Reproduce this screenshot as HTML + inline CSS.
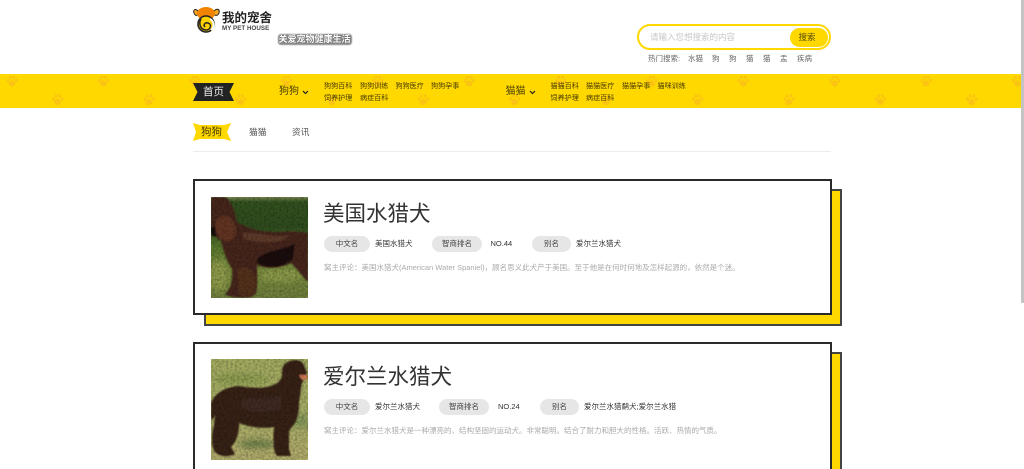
<!DOCTYPE html>
<html lang="zh">
<head>
<meta charset="utf-8">
<title>我的宠舍</title>
<style>
html,body{margin:0;padding:0;background:#fff;overflow:hidden}
#p{position:relative;width:1024px;height:469px;overflow:hidden;background:#fff;font-family:"Liberation Sans","Noto Sans CJK SC",sans-serif;color:#333}
#p div{position:absolute;white-space:nowrap}
.t{line-height:1;filter:blur(.3px)}
.s{font-size:7.100px;color:#4a3d00}
.h{font-size:7.500px;color:#666}
.pill{background:#e6e6e6;border-radius:8px;height:16px;line-height:16px;text-align:center;font-size:7.500px;color:#444;filter:blur(.2px)}
.v{font-size:7.500px;color:#333;line-height:16px;filter:blur(.25px)}
.title{font-size:21.500px;line-height:1;color:#333}
.rv{font-size:7.500px;line-height:10px;color:#aaa;filter:blur(.25px)}
.card{background:#fff;border:2px solid #2a2a2a;box-sizing:border-box}
.sh{background:#ffd800;border:2px solid #444;box-sizing:border-box}
</style>
</head>
<body>
<div id="p">
<!-- scrollbar -->
<div style="left:1021px;top:0;width:3px;height:303px;background:#c4c4c4"></div>

<!-- logo -->
<svg style="position:absolute;left:193px;top:6px" width="27" height="27" viewBox="0 0 27 27">
<path d="M5 5 C2 2 0 4 1 7 C2 10 4 10 6 8Z M21 5 C24 2 27 3 26 7 C25 10 22 10 20 8Z" fill="#f5a623" stroke="#222" stroke-width="1"/>
<ellipse cx="13" cy="7.500" rx="9" ry="6.500" fill="#f08300"/>
<circle cx="13" cy="18" r="8" fill="#fdd000" stroke="#222" stroke-width="1.600"/>
<path d="M8 13 C5 18 8 24 13 24 C18 24 19 18 15 17 C12 16 10 19 12 21" fill="none" stroke="#222" stroke-width="1.500"/>
<path d="M17 13 C21 15 22 21 18 24" fill="none" stroke="#fff" stroke-width="2"/>
</svg>
<div class="t" style="left:222px;top:12px;font-size:12.500px;font-weight:700;color:#222">我的宠舍</div>
<div class="t" style="left:222px;top:25.500px;font-size:6.200px;font-weight:700;color:#444;letter-spacing:.05px">MY PET HOUSE</div>
<div style="left:278px;top:34px;width:74px;height:11px;background:#8a8a8a;border-radius:3px;filter:blur(.4px)"></div>
<div class="t" style="left:278.500px;top:35px;font-size:9px;font-weight:700;color:#fff;text-shadow:0 0 1px #333">关爱宠物健康生活</div>

<!-- search -->
<div style="left:637px;top:24px;width:194px;height:26px;box-sizing:border-box;border:2px solid #ffd800;border-radius:13px;background:#fff"></div>
<div class="t" style="left:650px;top:33px;font-size:8.500px;color:#c8c8c8">请输入您想搜索的内容</div>
<div style="left:790px;top:28px;width:38px;height:19px;border-radius:10px;background:#ffd800"></div>
<div class="t" style="left:798.500px;top:33px;font-size:8.500px;color:#5a4a00">搜索</div>
<div class="t h" style="left:648px;top:55px">热门搜索:</div>
<div class="t h" style="left:688px;top:55px">水猫</div>
<div class="t h" style="left:712px;top:55px">狗</div>
<div class="t h" style="left:729px;top:55px">狗</div>
<div class="t h" style="left:746px;top:55px">猫</div>
<div class="t h" style="left:763px;top:55px">猫</div>
<div class="t h" style="left:780px;top:55px">盂</div>
<div class="t h" style="left:797px;top:55px">疾病</div>

<!-- nav -->
<svg style="position:absolute;left:0;top:74px" width="1021" height="34" viewBox="0 0 1021 34">
<defs>
<g id="paw" fill="#fbc312">
<ellipse cx="0" cy="2.500" rx="3.400" ry="3"/>
<ellipse cx="-4" cy="-.5" rx="1.300" ry="1.800"/>
<ellipse cx="-1.500" cy="-3.500" rx="1.300" ry="1.800"/>
<ellipse cx="2" cy="-3.500" rx="1.300" ry="1.800"/>
<ellipse cx="4.500" cy="-.5" rx="1.300" ry="1.800"/>
</g>
<pattern id="pp" x="-34" y="0" width="91.400" height="34" patternUnits="userSpaceOnUse">
<use href="#paw" x="46" y="7"/>
<use href="#paw" x="91.600" y="25.500"/>
<use href="#paw" x="0.200" y="25.500"/>
</pattern>
</defs>
<rect width="1021" height="34" fill="#ffd800"/>
<rect width="1021" height="34" fill="url(#pp)"/>
</svg>
<svg style="position:absolute;left:193px;top:83px" width="42" height="18" viewBox="0 0 42 18"><path d="M0 0H41L36.500 9L41 18H0L4.500 9Z" fill="#222"/></svg>
<div class="t" style="left:203px;top:86.500px;font-size:10.500px;color:#eee">首页</div>

<div class="t" style="left:279px;top:87px;font-size:10px;color:#4a3d00">狗狗</div>
<svg style="position:absolute;left:302px;top:90px" width="7" height="5" viewBox="0 0 7 5"><path d="M1 1L3.500 3.500L6 1" fill="none" stroke="#222" stroke-width="1.200"/></svg>
<div class="t s" style="left:324px;top:82.500px">狗狗百科</div>
<div class="t s" style="left:360px;top:82.500px">狗狗训练</div>
<div class="t s" style="left:395.500px;top:82.500px">狗狗医疗</div>
<div class="t s" style="left:431px;top:82.500px">狗狗孕事</div>
<div class="t s" style="left:324px;top:94.500px">饲养护理</div>
<div class="t s" style="left:360px;top:94.500px">病症百科</div>

<div class="t" style="left:505.500px;top:87px;font-size:10px;color:#4a3d00">猫猫</div>
<svg style="position:absolute;left:528.500px;top:90px" width="7" height="5" viewBox="0 0 7 5"><path d="M1 1L3.500 3.500L6 1" fill="none" stroke="#222" stroke-width="1.200"/></svg>
<div class="t s" style="left:550.500px;top:82.500px">猫猫百科</div>
<div class="t s" style="left:586px;top:82.500px">猫猫医疗</div>
<div class="t s" style="left:622px;top:82.500px">猫猫孕事</div>
<div class="t s" style="left:657.500px;top:82.500px">猫咪训练</div>
<div class="t s" style="left:550.500px;top:94.500px">饲养护理</div>
<div class="t s" style="left:586px;top:94.500px">病症百科</div>

<!-- tabs -->
<svg style="position:absolute;left:193px;top:123px" width="38" height="18" viewBox="0 0 38 18"><path d="M0 0L7 2H31L38 0L34 9L38 18L31 16H7L0 18L3 9Z" fill="#ffd800"/></svg>
<div class="t" style="left:201px;top:127px;font-size:10.500px;color:#4a3d00">狗狗</div>
<div class="t" style="left:249px;top:128px;font-size:8.700px;color:#555">猫猫</div>
<div class="t" style="left:292px;top:128px;font-size:8.700px;color:#555">资讯</div>
<div style="left:193px;top:151px;width:638px;height:1px;background:#ececec"></div>

<!-- card 1 -->
<div class="sh" style="left:204px;top:189px;width:638px;height:137px"></div>
<div class="card" style="left:193px;top:179px;width:639px;height:136px"></div>
<svg style="position:absolute;left:210.500px;top:196.500px" width="97" height="101" viewBox="0 0 97 101">
<defs>
<filter id="b1"><feGaussianBlur stdDeviation=".7"/></filter>
<filter id="b2"><feGaussianBlur stdDeviation="3"/></filter>
<filter id="nz" x="0" y="0" width="100%" height="100%"><feTurbulence type="fractalNoise" baseFrequency=".45" numOctaves="2" seed="4"/><feColorMatrix values="0 0 0 0 0  0 0 0 0 0  0 0 0 0 0  0 0 0 1.600 -.55"/></filter>
<linearGradient id="g1" x1="0" y1="0" x2="0" y2="1"><stop offset="0" stop-color="#7a8650"/><stop offset=".05" stop-color="#33521f"/><stop offset=".3" stop-color="#2f4d1e"/><stop offset=".5" stop-color="#5c7a2e"/><stop offset=".75" stop-color="#76893c"/><stop offset="1" stop-color="#70803c"/></linearGradient>
</defs>
<rect width="97" height="101" fill="url(#g1)"/>
<g filter="url(#b2)"><ellipse cx="70" cy="78" rx="22" ry="7" fill="#8b9a4a"/><ellipse cx="8" cy="78" rx="9" ry="16" fill="#909c4c"/></g>
<g filter="url(#b1)">
<path d="M0 0H14C20 3 24 14 26 25C38 32 50 35 68 35C78 34 88 34 97 36V85C92 80 86 72 80 66C68 72 56 72 46 68C46 78 47 90 45 97L40 100C30 101 20 101 14 97C20 92 22 84 21 72C16 64 12 54 10 44L0 36Z" fill="#47281c"/>
<path d="M6 22C14 14 25 22 25 34C25 43 17 46 11 43C6 40 3 30 6 22Z" fill="#633420"/>
<path d="M46 62C56 52 72 54 84 46L82 62C70 72 56 72 46 66Z" fill="#1e110b"/>
<path d="M32 36C46 34 60 42 80 38L70 44C56 46 42 46 32 41Z" fill="#5e3a2a"/>
<path d="M0 30L4 30L5 40L0 38Z" fill="#15100c"/>
<path d="M26 72C34 68 44 72 45 84L44 98L28 99Z" fill="#54301f"/>
</g>
<rect width="97" height="101" filter="url(#nz)" opacity=".35"/>
</svg>
<div class="t title" style="left:323px;top:203.500px">美国水猎犬</div>
<div class="pill" style="left:324px;top:236px;width:46px">中文名</div>
<div class="v" style="left:375px;top:236px">美国水猎犬</div>
<div class="pill" style="left:432px;top:236px;width:50px">智商排名</div>
<div class="v" style="left:490.500px;top:236px">NO.44</div>
<div class="pill" style="left:532px;top:236px;width:39px">别名</div>
<div class="v" style="left:576px;top:236px">爱尔兰水猎犬</div>
<div class="rv" style="left:324px;top:263px">窝主评论：美国水猎犬(American Water Spaniel)，顾名思义此犬产于美国。至于他是在何时何地及怎样起源的，依然是个迷。</div>

<!-- card 2 -->
<div class="sh" style="left:204px;top:352px;width:638px;height:137px"></div>
<div class="card" style="left:193px;top:342px;width:639px;height:136px"></div>
<svg style="position:absolute;left:210.500px;top:359px" width="97" height="101" viewBox="0 0 97 101">
<defs><linearGradient id="g2" x1="0" y1="0" x2="0" y2="1"><stop offset="0" stop-color="#a4ac60"/><stop offset=".5" stop-color="#a7ae66"/><stop offset="1" stop-color="#b3ad6c"/></linearGradient></defs>
<rect width="97" height="101" fill="url(#g2)"/>
<g filter="url(#b2)"><ellipse cx="30" cy="20" rx="28" ry="5" fill="#8c9d50"/><ellipse cx="90" cy="62" rx="8" ry="8" fill="#87995a"/><ellipse cx="46" cy="85" rx="18" ry="4" fill="#6d7f48"/></g>
<g filter="url(#b1)">
<path d="M73 6C78 0 90 -1 93 6L96 14C93 20 91 24 90 28C90 34 88 40 88 46C88 54 86 60 84 64L78 72L78 90L80 97H66C62 92 62 82 63 68C50 70 38 68 28 64C28 74 26 82 20 88L24 95C18 98 10 98 5 94C0 90 0 76 3 66L4 56L1 62L0 58V44C4 34 14 28 28 27C40 29 54 30 62 26C68 24 71 20 71 15C71 11 71 9 73 6Z" fill="#382219"/>
<path d="M88 16H97V20L91 21Z" fill="#d07a55"/>
<path d="M30 40C44 38 58 42 70 36L70 50C54 54 40 54 30 48Z" fill="#3f2a21"/>
</g>
<rect width="97" height="101" filter="url(#nz)" opacity=".35"/>
</svg>
<div class="t title" style="left:323px;top:366.500px">爱尔兰水猎犬</div>
<div class="pill" style="left:324px;top:399px;width:46px">中文名</div>
<div class="v" style="left:375px;top:399px">爱尔兰水猎犬</div>
<div class="pill" style="left:439px;top:399px;width:50px">智商排名</div>
<div class="v" style="left:498px;top:399px">NO.24</div>
<div class="pill" style="left:540px;top:399px;width:39px">别名</div>
<div class="v" style="left:584px;top:399px">爱尔兰水猎鹬犬;爱尔兰水猎</div>
<div class="rv" style="left:324px;top:426px">窝主评论：爱尔兰水猎犬是一种漂亮的、结构坚固的运动犬。非常聪明。结合了耐力和胆大的性格。活跃、热情的气质。</div>
</div>
</body>
</html>
